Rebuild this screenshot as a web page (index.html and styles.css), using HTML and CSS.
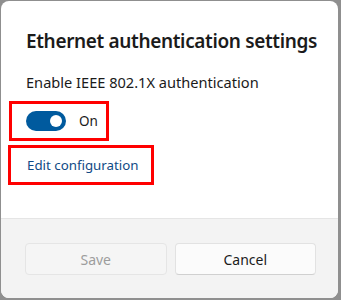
FILE: index.html
```html
<!DOCTYPE html>
<html>
<head>
<meta charset="utf-8">
<link rel="stylesheet" href="styles.css">
</head>
<body>
<div class="dialog">
  <div class="content">
    <h1 class="title">Ethernet authentication settings</h1>
    <div class="label">Enable IEEE 802.1X authentication</div>
    <div class="toggle-row hl">
      <span class="toggle"><span class="knob"></span></span>
      <span class="state">On</span>
    </div>
    <div class="link-row hl">
      <a class="link">Edit configuration</a>
    </div>
  </div>
  <div class="footer">
    <button class="btn disabled">Save</button>
    <button class="btn">Cancel</button>
  </div>
</div>
</body>
</html>
```
FILE: styles.css
```css
html, body {
  margin: 0;
  padding: 0;
}
body {
  width: 341px;
  height: 300px;
  background: #8f8f8f;
  font-family: "Noto Sans", "Open Sans", sans-serif;
  color: #1b1b1b;
  padding: 1px 0 0 1px;
  box-sizing: border-box;
  overflow: hidden;
}
.dialog {
  width: 337px;
  height: 297px;
  background: #ffffff;
  border-radius: 8px;
  overflow: hidden;
  display: flex;
  flex-direction: column;
}
.content {
  flex: 1;
  padding: 26px 0 0 25px;
  box-sizing: border-box;
}
.title {
  margin: 0;
  font-size: 19px;
  letter-spacing: -0.35px;
  font-weight: 600;
  line-height: 28px;
  white-space: nowrap;
}
.label {
  margin-top: 17px;
  font-size: 14.6px;
  line-height: 20px;
  white-space: nowrap;
}
.hl {
  border: 3px solid #ff0000;
  box-sizing: border-box;
}
.toggle-row {
  margin: 9px 0 0 -17px;
  width: 100px;
  height: 40px;
  display: flex;
  align-items: center;
  padding-left: 14px;
  gap: 13px;
}
.toggle {
  width: 40px;
  height: 20px;
  border-radius: 10px;
  background: #005a9e;
  display: flex;
  align-items: center;
  justify-content: flex-end;
  padding-right: 4px;
  box-sizing: border-box;
}
.knob {
  width: 12px;
  height: 12px;
  border-radius: 50%;
  background: #ffffff;
}
.state {
  font-size: 13.5px;
}
.link-row {
  margin: 4px 0 0 -18px;
  width: 146px;
  height: 40px;
  display: flex;
  align-items: center;
  padding-left: 16px;
}
.link {
  font-size: 13.3px;
  color: #0f4a85;
}
.footer {
  height: 80px;
  background: #f3f3f3;
  border-top: 1px solid #e5e5e5;
  box-sizing: border-box;
  display: grid;
  grid-template-columns: 1fr 1fr;
  gap: 8px;
  padding: 24px 22px 0 24px;
  align-items: start;
}
.btn {
  height: 32px;
  border-radius: 4px;
  border: 1px solid #e2e2e2;
  border-bottom-color: #d0d0d0;
  background: #fbfbfb;
  font-family: inherit;
  font-size: 14px;
  color: #1b1b1b;
}
.btn.disabled {
  background: #f5f5f5;
  border-color: #e5e5e5;
  color: #9d9d9d;
}
```
